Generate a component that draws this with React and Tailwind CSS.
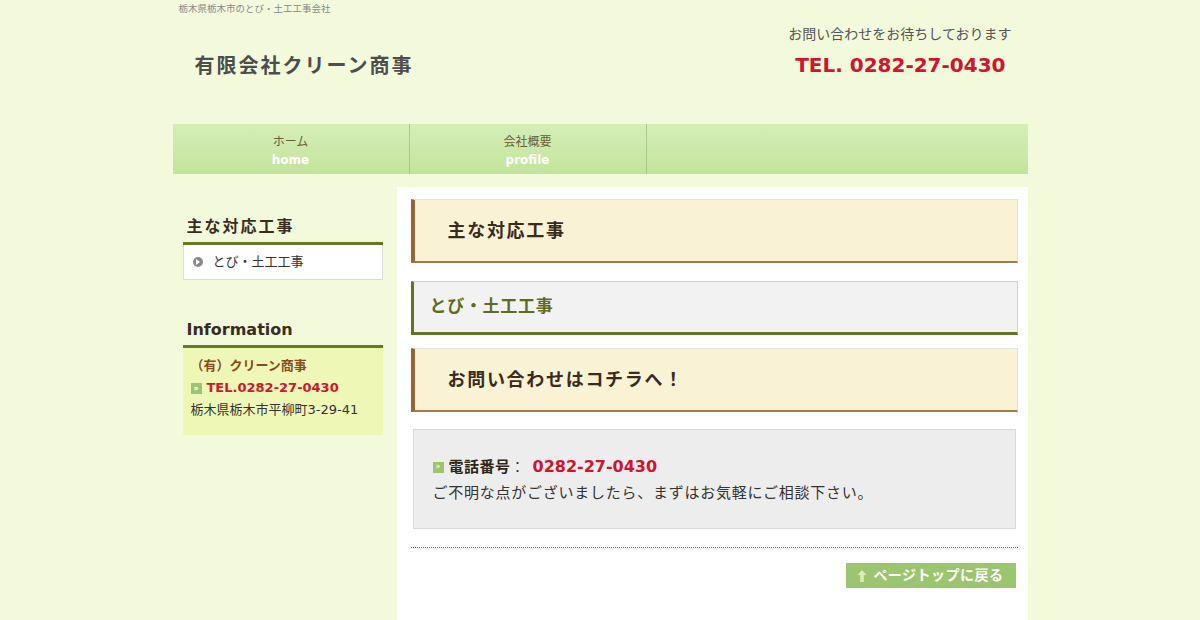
const font = { fontFamily: '"DejaVu Sans", "Noto Sans CJK JP", sans-serif' };

function GreenMark() {
  return (
    <span className="inline-flex items-center justify-center w-[11px] h-[11px] bg-[#9bc56e] text-white text-[8px] leading-none mr-[5px] align-middle">
      »
    </span>
  );
}

function NavItem({ jp, en }) {
  return (
    <div className="w-[237px] h-full flex flex-col items-center justify-center pt-[3px] border-r border-[#a9c98a] leading-[18px]">
      <span className="text-[12px] text-[#6b5d36]">{jp}</span>
      <span className="text-[12px] font-bold text-white">{en}</span>
    </div>
  );
}

function Heading2({ children }) {
  return (
    <div className="h-[64px] flex items-center bg-[#f9f2d5] border-l-[4px] border-l-[#9a6434] border-b-2 border-b-[#a87b45] border-t border-t-[#e3e3e3] border-r border-r-[#ece3c4] pl-[33px] text-[18px] font-bold text-[#3b2b1b] tracking-[1.7px]">
      {children}
    </div>
  );
}

export default function App() {
  return (
    <div className="min-h-[620px] bg-[#f2fadb]" style={font}>
      <div className="w-[855px] mx-auto">
        <div className="h-[18px] pl-[6px] pt-[2px] text-[9.5px] text-[#888]">栃木県栃木市のとび・土工工事会社</div>
        <div className="h-[106px] flex justify-between">
          <div className="pl-[22px] pt-[33px] text-[20px] font-bold text-[#4d4d4d] tracking-[2px]">有限会社クリーン商事</div>
          <div className="pr-[22px] pt-[6px] flex flex-col items-end">
            <div className="text-[14px] text-[#555] mr-[-6px]">お問い合わせをお待ちしております</div>
            <div className="mt-[5px] text-[20px] font-bold text-[#d2142e]">TEL. 0282-27-0430</div>
          </div>
        </div>
        <div className="h-[50px] flex bg-gradient-to-b from-[#d5eeb8] to-[#c3e49b]">
          <NavItem jp="ホーム" en="home" />
          <NavItem jp="会社概要" en="profile" />
        </div>
        <div className="mt-[13px] flex">
          <div className="w-[224px] pl-[10px] pr-[14px]">
            <div className="mt-[24px] h-[31px] flex items-center pl-[4px] text-[16px] font-bold text-[#3a2c1e] tracking-[2px]">主な対応工事</div>
            <div className="border-t-[3px] border-t-[#667a26]">
              <div className="h-[35px] flex items-center bg-white border border-t-0 border-[#dcdcdc] pl-[9px] text-[13px] text-[#333]">
                <span className="w-[10px] h-[10px] rounded-full bg-[#8a8a8a] flex items-center justify-center mr-[10px]">
                  <span className="w-0 h-0 border-y-[3px] border-y-transparent border-l-[4px] border-l-white ml-[1px]" />
                </span>
                とび・土工工事
              </div>
            </div>
            <div className="mt-[34px] h-[31px] flex items-center pl-[4px] text-[16px] font-bold text-[#3a2c1e]">Information</div>
            <div className="border-t-[3px] border-t-[#667a26]">
              <div className="h-[87px] bg-[#eef7b6] pl-[8px] pt-[7px] text-[13px] leading-[22px]">
                <div className="font-bold text-[#8b4a1c]">（有）クリーン商事</div>
                <div className="font-bold text-[#d2142e] text-[13px]"><GreenMark />TEL.0282-27-0430</div>
                <div className="text-[#333]">栃木県栃木市平柳町3-29-41</div>
              </div>
            </div>
          </div>
          <div className="flex-1 bg-white min-h-[433px] pl-[14px] pr-[10px] pt-[12px]">
            <Heading2>主な対応工事</Heading2>
            <div className="mt-[18px] h-[54px] flex items-center bg-[#f2f2f2] border-l-[3px] border-l-[#617524] border-b-[3px] border-b-[#617524] border-t border-t-[#d0d0d0] border-r border-r-[#d0d0d0] pl-[16px] text-[17px] font-bold text-[#5d6b27] tracking-[0.7px]">
              とび・土工工事
            </div>
            <div className="mt-[13px]">
              <Heading2>お問い合わせはコチラへ！</Heading2>
            </div>
            <div className="mt-[17px] mx-[2px] h-[100px] bg-[#ededed] border border-[#d9d9d9] pl-[19px] pt-[24px] text-[14px] text-[#333] leading-[26px]">
              <div className="flex items-center">
                <GreenMark />
                <span className="font-bold text-[#2e2418] text-[15px] tracking-[0.5px]">電話番号</span>
                <span className="mr-[8px]">：</span>
                <span className="text-[16px] font-bold text-[#d2142e]">0282-27-0430</span>
              </div>
              <div className="text-[15px] tracking-[0.75px]">ご不明な点がございましたら、まずはお気軽にご相談下さい。</div>
            </div>
            <div className="mt-[18px] border-t border-dotted border-[#5a6a80]" />
            <div className="mt-[15px] flex justify-end pr-[2px]">
              <div className="h-[25px] w-[170px] bg-[#9bc56e] text-white text-[14px] font-bold flex items-center justify-center tracking-[0.5px]">
                <svg width="10" height="14" viewBox="0 0 10 14" className="mr-[6px]">
                  <path d="M5 1 L9.5 6 H6.8 V13 H3.2 V6 H0.5 Z" fill="#d6efbd" />
                </svg>
                ページトップに戻る
              </div>
            </div>
          </div>
        </div>
      </div>
    </div>
  );
}
